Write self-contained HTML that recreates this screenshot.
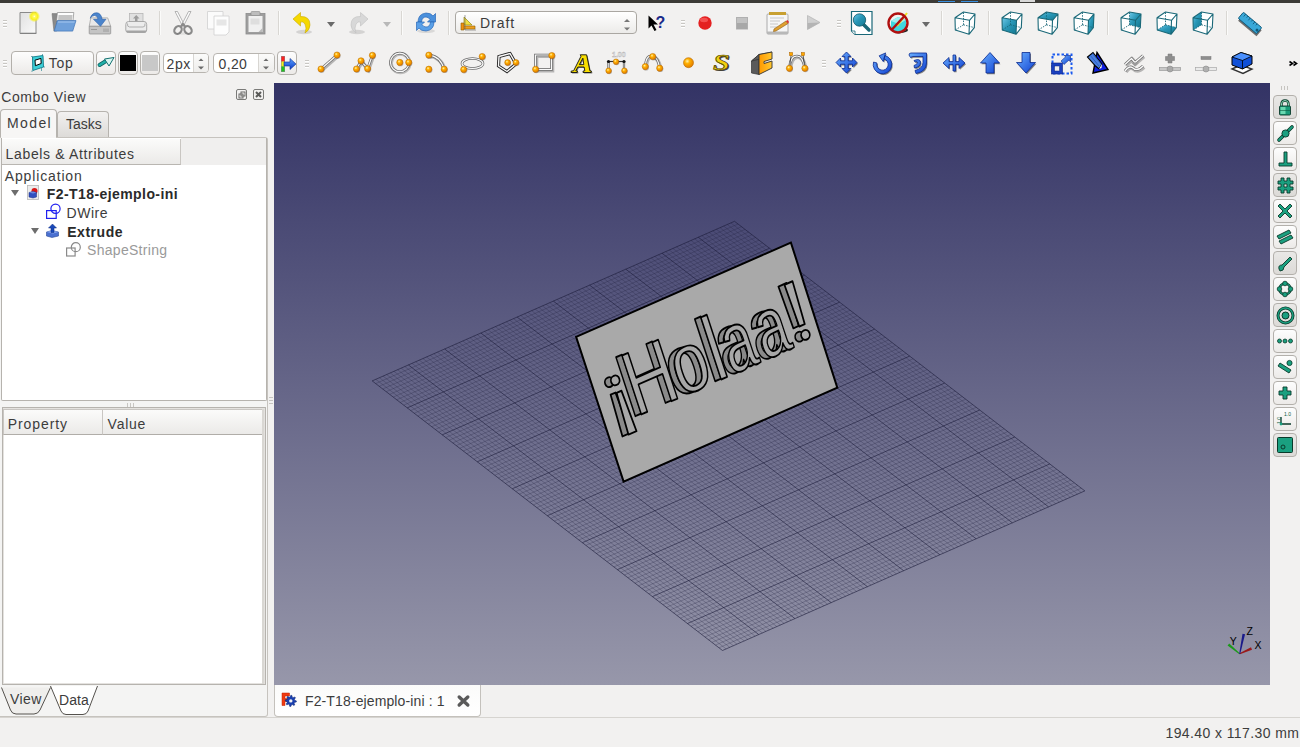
<!DOCTYPE html><html><head><meta charset="utf-8"><style>
html,body{margin:0;padding:0;}
body{width:1300px;height:747px;position:relative;overflow:hidden;background:#f2f1f0;font-family:"Liberation Sans", sans-serif;}
.t{position:absolute;white-space:nowrap;line-height:1;}
.a{position:absolute;box-sizing:border-box;}
svg{position:absolute;overflow:visible;}
</style></head><body>

<div class="a" style="left:0;top:0;width:1300px;height:3px;background:#3c3b37"></div>
<div class="a" style="left:938px;top:1px;width:17px;height:1px;background:#3a90e0"></div>
<div class="a" style="left:961px;top:1px;width:17px;height:1px;background:#3a90e0"></div>
<div class="a" style="left:1020px;top:0;width:15px;height:2px;background:#d8d8d8"></div>
<svg width="0" height="0" style="position:absolute"><defs>
<radialGradient id="gball" cx=".38" cy=".35" r=".7"><stop offset="0" stop-color="#fff3b0"/><stop offset=".35" stop-color="#ffb000"/><stop offset="1" stop-color="#e07800"/></radialGradient>
<linearGradient id="gblue" x1="0" y1="0" x2="0" y2="1"><stop offset="0" stop-color="#5aa0ff"/><stop offset="1" stop-color="#0a3cc8"/></linearGradient>
<linearGradient id="gblue2" x1="0" y1="0" x2="1" y2="1"><stop offset="0" stop-color="#6ab0ff"/><stop offset="1" stop-color="#1040d0"/></linearGradient>
<linearGradient id="gteal" x1="0" y1="0" x2="1" y2="1"><stop offset="0" stop-color="#6cc8e8"/><stop offset=".45" stop-color="#2a98b8"/><stop offset="1" stop-color="#137890"/></linearGradient>
<linearGradient id="gorange" x1="0" y1="0" x2="1" y2="0"><stop offset="0" stop-color="#ff9800"/><stop offset="1" stop-color="#ffc830"/></linearGradient>
<linearGradient id="gbtn" x1="0" y1="0" x2="0" y2="1"><stop offset="0" stop-color="#fdfdfd"/><stop offset="1" stop-color="#e6e5e3"/></linearGradient>
<linearGradient id="gpage" x1="0" y1="0" x2="1" y2="1"><stop offset="0" stop-color="#e0e0e0"/><stop offset="1" stop-color="#fafafa"/></linearGradient>
<radialGradient id="gyel" cx=".5" cy=".5" r=".5"><stop offset="0" stop-color="#fffff0"/><stop offset=".2" stop-color="#fff860"/><stop offset=".6" stop-color="#f8f020"/><stop offset="1" stop-color="#f8f020" stop-opacity="0"/></radialGradient>
</defs></svg>
<svg style="left:3px;top:20px;" width="4" height="8" viewBox="0 0 4 8"><rect x="0" y="0" width="4" height="1" fill="#c9c7c3"/><rect x="0" y="1" width="4" height="1" fill="#fff"/><rect x="0" y="3" width="4" height="1" fill="#c9c7c3"/><rect x="0" y="4" width="4" height="1" fill="#fff"/><rect x="0" y="6" width="4" height="1" fill="#c9c7c3"/><rect x="0" y="7" width="4" height="1" fill="#fff"/></svg>
<svg style="left:19px;top:11px;" width="24" height="24" viewBox="0 0 24 24"><path d="M1 1.5H17V22.5H1Z" fill="url(#gpage)" stroke="#8a8a8a" stroke-width="1"/><rect x="1.5" y="21.5" width="16" height="1.5" fill="#777" opacity=".5"/><circle cx="15.3" cy="5.4" r="5.8" fill="url(#gyel)"/></svg>
<svg style="left:52px;top:11.5px;" width="24" height="24" viewBox="0 0 24 24"><path d="M0 1.6H5.4L4.6 19.1H1.9Z" fill="#8a8a8a" stroke="#6a6a6a" stroke-width=".5"/><path d="M5.4 0.5H21.8L21 9H4.6Z" fill="#fdfdfd" stroke="#8a8a8a" stroke-width=".7"/><path d="M6.5 3H20.5L20 9H6Z" fill="#c4c4c4"/><path d="M5.4 8.6H24L20.7 19.1H2.2Z" fill="#6fa0da" stroke="#3e72b8" stroke-width=".7"/><path d="M6 9.4H22.8L22.5 10.4H5.7Z" fill="#a8c8f0"/></svg>
<svg style="left:89px;top:11.5px;" width="24" height="24" viewBox="0 0 24 24"><path d="M1.8 5.9H18.7L21.7 14.3H0.2Z" fill="#e8e8e8" stroke="#9a9a9a" stroke-width=".7"/><path d="M0.2 14.3H21.7V21.3Q21.7 22 21 22H0.9Q0.2 22 0.2 21.3Z" fill="#c4c4c4" stroke="#8c8c8c" stroke-width=".7"/><path d="M2 17.5H8M15 16.5V20M17 16.5V20M19 16.5V20" stroke="#9a9a9a" stroke-width="1"/><path d="M1.2 6.2Q3 0.5 8 0.8Q12 1.2 13.2 7.3H16.9L11.5 14.3L4.5 7.3H9Q8.5 3.5 5.5 3.5Q3 3.6 1.2 6.2Z" fill="#4a84cc" stroke="#2a5ea8" stroke-width=".6"/></svg>
<svg style="left:125px;top:13px;" width="24" height="24" viewBox="0 0 24 24"><rect x="4.5" y="0.5" width="13.5" height="9" fill="#e0e0e0" stroke="#b0b0b0" stroke-width=".7"/><path d="M11.2 2L14.5 5.5H12.5V8.5H10V5.5H8Z" fill="#9c9c9c"/><path d="M0.8 11.5Q0.8 8.5 3.5 8.5H19Q21.7 8.5 21.7 11.5V17Q21.7 19.5 19 19.5H3.5Q0.8 19.5 0.8 17Z" fill="#ececec" stroke="#a0a0a0" stroke-width=".9"/><path d="M2.5 10.5Q2 14 4.5 14H18Q20.5 14 20 10.5" fill="none" stroke="#a8a8a8" stroke-width=".9"/><path d="M1.5 17.5H21V18.5Q21 19.7 19.5 19.7H3Q1.5 19.7 1.5 18.5Z" fill="#a4a4a4"/></svg>
<svg style="left:159px;top:11px;" width="2" height="24" viewBox="0 0 2 24"><rect x="0" y="0" width="1" height="24" fill="#d9d7d3"/><rect x="1" y="0" width="1" height="24" fill="#fbfbfa"/></svg>
<svg style="left:173px;top:11px;" width="24" height="24" viewBox="0 0 24 24"><path d="M2 0.5L4.5 0.5L11.5 14L9.5 15Z" fill="#fafafa" stroke="#9a9a9a" stroke-width=".7"/><path d="M18 0.5L15.5 0.5L8.5 14L10.5 15Z" fill="#fafafa" stroke="#9a9a9a" stroke-width=".7"/><ellipse cx="5" cy="19" rx="3.4" ry="4.2" transform="rotate(35 5 19)" fill="none" stroke="#8a8a8a" stroke-width="2.2"/><ellipse cx="15" cy="19" rx="3.4" ry="4.2" transform="rotate(-35 15 19)" fill="none" stroke="#8a8a8a" stroke-width="2.2"/><path d="M8 15.5L10 13L12 15.5" stroke="#8a8a8a" stroke-width="2.2" fill="none"/><ellipse cx="10" cy="22.5" rx="7" ry="1.2" fill="#000" opacity=".07"/></svg>
<svg style="left:207px;top:10.5px;" width="24" height="24" viewBox="0 0 24 24"><path d="M0.5 0.5H16V18H0.5Z" fill="#fbfbfb" stroke="#d0d0d0" stroke-width=".8"/><path d="M7 5H22V21L19 24H7Z" fill="#fdfdfd" stroke="#d0d0d0" stroke-width=".8"/><rect x="9.5" y="8.5" width="10" height="6" fill="#e6e6e6"/></svg>
<svg style="left:245px;top:10.5px;" width="24" height="24" viewBox="0 0 24 24"><rect x="1" y="2.5" width="19" height="20.5" fill="#9e9e9e" stroke="#8c8c8c" stroke-width=".8"/><path d="M3.5 5H17.5V21H3.5Z" fill="#f0f0f0"/><rect x="6" y="0.5" width="9" height="4" rx="1" fill="#bdbdbd" stroke="#8c8c8c" stroke-width=".6"/><rect x="5.5" y="7.5" width="9" height="6" fill="#dedede"/><path d="M13.5 21L17.5 17V21Z" fill="#bbb"/></svg>
<svg style="left:278px;top:11px;" width="2" height="24" viewBox="0 0 2 24"><rect x="0" y="0" width="1" height="24" fill="#d9d7d3"/><rect x="1" y="0" width="1" height="24" fill="#fbfbfa"/></svg>
<svg style="left:293px;top:11.5px;" width="24" height="24" viewBox="0 0 24 24"><ellipse cx="11" cy="20" rx="8" ry="2.2" fill="#000" opacity=".12"/><path d="M0 7L7.5 0.5V4.5Q17 4 17 13Q17 18 12 21Q14 16 12 12Q10 9 7.5 10V14Z" fill="#f5d800" stroke="#c8a800" stroke-width=".6"/></svg>
<svg style="left:326.5px;top:22px;" width="8" height="5" viewBox="0 0 8 5"><path d="M0 0H8L4 5Z" fill="#6a6a6a"/></svg>
<svg style="left:350px;top:11.5px;" width="24" height="24" viewBox="0 0 24 24"><g transform="translate(18 0) scale(-1 1)"><ellipse cx="11" cy="20" rx="8" ry="2.2" fill="#000" opacity=".12"/><path d="M0 7L7.5 0.5V4.5Q17 4 17 13Q17 18 12 21Q14 16 12 12Q10 9 7.5 10V14Z" fill="#d8d8d8" stroke="#c0c0c0" stroke-width=".6"/></g></svg>
<svg style="left:382.5px;top:22px;" width="8" height="5" viewBox="0 0 8 5"><path d="M0 0H8L4 5Z" fill="#b8b8b8"/></svg>
<svg style="left:401px;top:11px;" width="2" height="24" viewBox="0 0 2 24"><rect x="0" y="0" width="1" height="24" fill="#d9d7d3"/><rect x="1" y="0" width="1" height="24" fill="#fbfbfa"/></svg>
<svg style="left:416px;top:12px;" width="24" height="24" viewBox="0 0 24 24"><ellipse cx="10" cy="19" rx="9" ry="2" fill="#000" opacity=".1"/><path d="M2 10Q2 2 10 1Q15 1 17 4L19.5 1.5V10H11.5L14 7.5Q12.5 5 10 5Q6 5 5.5 10Z" fill="#4a90dc" stroke="#2a68b8" stroke-width=".7"/><path d="M18 10Q18 18 10 19Q5 19 3 16L0.5 18.5V10H8.5L6 12.5Q7.5 15 10 15Q14 15 14.5 10Z" fill="#5aa0e8" stroke="#2a68b8" stroke-width=".7"/></svg>
<svg style="left:448px;top:11px;" width="2" height="24" viewBox="0 0 2 24"><rect x="0" y="0" width="1" height="24" fill="#d9d7d3"/><rect x="1" y="0" width="1" height="24" fill="#fbfbfa"/></svg>
<div class="a" style="left:455px;top:11px;width:182px;height:23px;border:1px solid #aaa7a2;border-radius:4px;background:linear-gradient(#ffffff,#ecebe9)"></div>
<svg style="left:460px;top:14px;" width="17" height="17" viewBox="0 0 17 17"><path d="M2 12H15V15H2Z" fill="#f0a020" stroke="#8a5a00" stroke-width=".6"/><path d="M4 11V3L12 11Z" fill="#f0e040" stroke="#8a7a00" stroke-width=".6"/><path d="M1 9H4V16H1Z" fill="#f09010" stroke="#8a5a00" stroke-width=".6"/><path d="M5 1V16M5 16H16" stroke="#666" stroke-width=".6"/></svg>
<div class="t" style="left:480px;top:16.45px;font-size:14px;color:#3c3c3c;font-weight:400;letter-spacing:0.95px;">Draft</div>
<svg style="left:623.5px;top:19px;" width="6" height="12" viewBox="0 0 6 12"><path d="M0 3L3 0L6 3Z" fill="#777"/><path d="M0 8.5L3 11.5L6 8.5Z" fill="#777"/></svg>
<svg style="left:647.5px;top:15px;" width="18" height="16" viewBox="0 0 18 16"><path d="M0.5 0.5V13.5L3.5 10.5L6.5 16L8.5 15L5.5 9.5H10Z" fill="#000"/><text x="7.5" y="12.5" font-family="Liberation Sans" font-weight="700" font-size="16" fill="#1a2a8a">?</text></svg>
<svg style="left:681px;top:20px;" width="4" height="8" viewBox="0 0 4 8"><rect x="0" y="0" width="4" height="1" fill="#c9c7c3"/><rect x="0" y="1" width="4" height="1" fill="#fff"/><rect x="0" y="3" width="4" height="1" fill="#c9c7c3"/><rect x="0" y="4" width="4" height="1" fill="#fff"/><rect x="0" y="6" width="4" height="1" fill="#c9c7c3"/><rect x="0" y="7" width="4" height="1" fill="#fff"/></svg>
<svg style="left:698px;top:16px;" width="14" height="14" viewBox="0 0 14 14"><circle cx="7" cy="7" r="6.7" fill="#e42020"/><ellipse cx="6" cy="4" rx="4" ry="2.2" fill="#ff7070" opacity=".6"/></svg>
<svg style="left:735.5px;top:16.5px;" width="12" height="13" viewBox="0 0 12 13"><rect x="0.5" y="0.5" width="11" height="11.5" fill="#c2c2c2" stroke="#b0b0b0"/><rect x="1" y="6" width="10" height="6" fill="#a8a8a8"/></svg>
<svg style="left:766px;top:11.5px;" width="24" height="24" viewBox="0 0 24 24"><rect x="1" y="2" width="21" height="20" rx="1" fill="#f6f6f6" stroke="#9a9a9a" stroke-width=".8"/><rect x="1" y="19.5" width="21" height="2.5" fill="#b8b8b8"/><rect x="3" y="0" width="17" height="3" fill="#c8a030"/><path d="M4 6H18M4 9H14M4 12H12M4 15H11" stroke="#c8c8c8" stroke-width="1"/><path d="M8 17L20 9L22 11.5L10 19L7.5 19.5Z" fill="#e0a030" stroke="#8a5a10" stroke-width=".6"/><path d="M20 9L22 11.5L23 10L21.5 8Z" fill="#e03030"/></svg>
<svg style="left:806.5px;top:15px;" width="14" height="16" viewBox="0 0 14 16"><path d="M0.5 0.5L13 7.5L0.5 14.5Z" fill="#d0d0d0" stroke="#b8b8b8" stroke-width=".8"/><path d="M0.5 8L13 7.5L0.5 14.5Z" fill="#b4b4b4"/></svg>
<svg style="left:837px;top:20px;" width="4" height="8" viewBox="0 0 4 8"><rect x="0" y="0" width="4" height="1" fill="#c9c7c3"/><rect x="0" y="1" width="4" height="1" fill="#fff"/><rect x="0" y="3" width="4" height="1" fill="#c9c7c3"/><rect x="0" y="4" width="4" height="1" fill="#fff"/><rect x="0" y="6" width="4" height="1" fill="#c9c7c3"/><rect x="0" y="7" width="4" height="1" fill="#fff"/></svg>
<svg style="left:851px;top:10.5px;" width="24" height="24" viewBox="0 0 24 24"><path d="M0.5 0.5H21V23.5H4L0.5 20Z" fill="#fff" stroke="#1a6878" stroke-width="1.2"/><path d="M0.5 20L4 20L4 23.5" fill="#fff" stroke="#1a6878" stroke-width=".8"/><path d="M12 13L18 19" stroke="#1a6878" stroke-width="3.5" stroke-linecap="round"/><circle cx="8.5" cy="9" r="6.2" fill="url(#gteal)" stroke="#115868" stroke-width=".8"/></svg>
<svg style="left:887px;top:12px;" width="24" height="24" viewBox="0 0 24 24"><ellipse cx="13" cy="18" rx="8" ry="3" fill="#222"/><path d="M4 9L11 5L19 8V18L12 22L4 18Z" fill="#40d8e0"/><path d="M4 9L11 5L19 8L12 12Z" fill="#a0f0f0"/><path d="M10 14L20 1" stroke="#f0e020" stroke-width="2"/><circle cx="11" cy="11" r="9.5" fill="none" stroke="#b01010" stroke-width="2.4"/><path d="M4.5 18L17.5 4" stroke="#b01010" stroke-width="2.4"/></svg>
<svg style="left:922px;top:22px;" width="8" height="5" viewBox="0 0 8 5"><path d="M0 0H8L4 5Z" fill="#6a6a6a"/></svg>
<svg style="left:941px;top:11px;" width="2" height="24" viewBox="0 0 2 24"><rect x="0" y="0" width="1" height="24" fill="#d9d7d3"/><rect x="1" y="0" width="1" height="24" fill="#fbfbfa"/></svg>
<svg style="left:954px;top:10.5px;" width="24" height="24" viewBox="0 0 24 24"><path d="M1.0 6.8L15.5 9.3L15.0 23.3L1.3 19.0ZM9.5 1.0L21.0 3.0L20.3 16.6L9.5 13.8Z" fill="#fff"/><path d="M1.0 6.8L15.5 9.3L21.0 3.0L9.5 1.0ZM15.5 9.3L21.0 3.0L20.3 16.6L15.0 23.3Z" fill="#fff"/><path d="M9.5 13.8L9.5 1.0M9.5 13.8L20.3 16.6M9.5 13.8L1.3 19.0" stroke="#1a6878" stroke-width=".9" stroke-dasharray="1.5 1.2" fill="none"/><path d="M1.0 6.8L15.5 9.3L15.0 23.3L1.3 19.0ZM1.0 6.8L9.5 1.0L21.0 3.0L15.5 9.3M21.0 3.0L20.3 16.6L15.0 23.3" stroke="#1a6878" stroke-width="1.1" fill="none" stroke-linejoin="round"/></svg>
<svg style="left:988px;top:11px;" width="2" height="24" viewBox="0 0 2 24"><rect x="0" y="0" width="1" height="24" fill="#d9d7d3"/><rect x="1" y="0" width="1" height="24" fill="#fbfbfa"/></svg>
<svg style="left:1000.5px;top:10.5px;" width="24" height="24" viewBox="0 0 24 24"><path d="M1.0 6.8L15.5 9.3L15.0 23.3L1.3 19.0ZM9.5 1.0L21.0 3.0L20.3 16.6L9.5 13.8Z" fill="#fff"/><path d="M1.0 6.8L15.5 9.3L21.0 3.0L9.5 1.0ZM15.5 9.3L21.0 3.0L20.3 16.6L15.0 23.3Z" fill="#fff"/><path d="M1.0 6.8L15.5 9.3L15.0 23.3L1.3 19.0Z" fill="url(#gteal)"/><path d="M9.5 13.8L9.5 1.0M9.5 13.8L20.3 16.6M9.5 13.8L1.3 19.0" stroke="#1a6878" stroke-width=".9" stroke-dasharray="1.5 1.2" fill="none"/><path d="M1.0 6.8L15.5 9.3L15.0 23.3L1.3 19.0ZM1.0 6.8L9.5 1.0L21.0 3.0L15.5 9.3M21.0 3.0L20.3 16.6L15.0 23.3" stroke="#1a6878" stroke-width="1.1" fill="none" stroke-linejoin="round"/></svg>
<svg style="left:1036.5px;top:10.5px;" width="24" height="24" viewBox="0 0 24 24"><path d="M1.0 6.8L15.5 9.3L15.0 23.3L1.3 19.0ZM9.5 1.0L21.0 3.0L20.3 16.6L9.5 13.8Z" fill="#fff"/><path d="M1.0 6.8L15.5 9.3L21.0 3.0L9.5 1.0ZM15.5 9.3L21.0 3.0L20.3 16.6L15.0 23.3Z" fill="#fff"/><path d="M1.0 6.8L15.5 9.3L21.0 3.0L9.5 1.0Z" fill="url(#gteal)"/><path d="M9.5 13.8L9.5 1.0M9.5 13.8L20.3 16.6M9.5 13.8L1.3 19.0" stroke="#1a6878" stroke-width=".9" stroke-dasharray="1.5 1.2" fill="none"/><path d="M1.0 6.8L15.5 9.3L15.0 23.3L1.3 19.0ZM1.0 6.8L9.5 1.0L21.0 3.0L15.5 9.3M21.0 3.0L20.3 16.6L15.0 23.3" stroke="#1a6878" stroke-width="1.1" fill="none" stroke-linejoin="round"/></svg>
<svg style="left:1073px;top:10.5px;" width="24" height="24" viewBox="0 0 24 24"><path d="M1.0 6.8L15.5 9.3L15.0 23.3L1.3 19.0ZM9.5 1.0L21.0 3.0L20.3 16.6L9.5 13.8Z" fill="#fff"/><path d="M1.0 6.8L15.5 9.3L21.0 3.0L9.5 1.0ZM15.5 9.3L21.0 3.0L20.3 16.6L15.0 23.3Z" fill="#fff"/><path d="M15.5 9.3L21.0 3.0L20.3 16.6L15.0 23.3Z" fill="url(#gteal)"/><path d="M9.5 13.8L9.5 1.0M9.5 13.8L20.3 16.6M9.5 13.8L1.3 19.0" stroke="#1a6878" stroke-width=".9" stroke-dasharray="1.5 1.2" fill="none"/><path d="M1.0 6.8L15.5 9.3L15.0 23.3L1.3 19.0ZM1.0 6.8L9.5 1.0L21.0 3.0L15.5 9.3M21.0 3.0L20.3 16.6L15.0 23.3" stroke="#1a6878" stroke-width="1.1" fill="none" stroke-linejoin="round"/></svg>
<svg style="left:1107px;top:11px;" width="2" height="24" viewBox="0 0 2 24"><rect x="0" y="0" width="1" height="24" fill="#d9d7d3"/><rect x="1" y="0" width="1" height="24" fill="#fbfbfa"/></svg>
<svg style="left:1120px;top:10.5px;" width="24" height="24" viewBox="0 0 24 24"><path d="M1.0 6.8L15.5 9.3L15.0 23.3L1.3 19.0ZM9.5 1.0L21.0 3.0L20.3 16.6L9.5 13.8Z" fill="#fff"/><path d="M1.0 6.8L15.5 9.3L21.0 3.0L9.5 1.0ZM15.5 9.3L21.0 3.0L20.3 16.6L15.0 23.3Z" fill="#fff"/><path d="M9.5 1.0L21.0 3.0L20.3 16.6L9.5 13.8Z" fill="url(#gteal)"/><path d="M9.5 13.8L9.5 1.0M9.5 13.8L20.3 16.6M9.5 13.8L1.3 19.0" stroke="#1a6878" stroke-width=".9" stroke-dasharray="1.5 1.2" fill="none"/><path d="M1.0 6.8L15.5 9.3L15.0 23.3L1.3 19.0ZM1.0 6.8L9.5 1.0L21.0 3.0L15.5 9.3M21.0 3.0L20.3 16.6L15.0 23.3" stroke="#1a6878" stroke-width="1.1" fill="none" stroke-linejoin="round"/></svg>
<svg style="left:1156px;top:10.5px;" width="24" height="24" viewBox="0 0 24 24"><path d="M1.0 6.8L15.5 9.3L15.0 23.3L1.3 19.0ZM9.5 1.0L21.0 3.0L20.3 16.6L9.5 13.8Z" fill="#fff"/><path d="M1.0 6.8L15.5 9.3L21.0 3.0L9.5 1.0ZM15.5 9.3L21.0 3.0L20.3 16.6L15.0 23.3Z" fill="#fff"/><path d="M1.3 19.0L15.0 23.3L20.3 16.6L9.5 13.8Z" fill="url(#gteal)"/><path d="M9.5 13.8L9.5 1.0M9.5 13.8L20.3 16.6M9.5 13.8L1.3 19.0" stroke="#1a6878" stroke-width=".9" stroke-dasharray="1.5 1.2" fill="none"/><path d="M1.0 6.8L15.5 9.3L15.0 23.3L1.3 19.0ZM1.0 6.8L9.5 1.0L21.0 3.0L15.5 9.3M21.0 3.0L20.3 16.6L15.0 23.3" stroke="#1a6878" stroke-width="1.1" fill="none" stroke-linejoin="round"/></svg>
<svg style="left:1192px;top:10.5px;" width="24" height="24" viewBox="0 0 24 24"><path d="M1.0 6.8L15.5 9.3L15.0 23.3L1.3 19.0ZM9.5 1.0L21.0 3.0L20.3 16.6L9.5 13.8Z" fill="#fff"/><path d="M1.0 6.8L15.5 9.3L21.0 3.0L9.5 1.0ZM15.5 9.3L21.0 3.0L20.3 16.6L15.0 23.3Z" fill="#fff"/><path d="M1.0 6.8L9.5 1.0L9.5 13.8L1.3 19.0Z" fill="url(#gteal)"/><path d="M9.5 13.8L9.5 1.0M9.5 13.8L20.3 16.6M9.5 13.8L1.3 19.0" stroke="#1a6878" stroke-width=".9" stroke-dasharray="1.5 1.2" fill="none"/><path d="M1.0 6.8L15.5 9.3L15.0 23.3L1.3 19.0ZM1.0 6.8L9.5 1.0L21.0 3.0L15.5 9.3M21.0 3.0L20.3 16.6L15.0 23.3" stroke="#1a6878" stroke-width="1.1" fill="none" stroke-linejoin="round"/></svg>
<svg style="left:1226px;top:11px;" width="2" height="24" viewBox="0 0 2 24"><rect x="0" y="0" width="1" height="24" fill="#d9d7d3"/><rect x="1" y="0" width="1" height="24" fill="#fbfbfa"/></svg>
<svg style="left:1239px;top:10.5px;" width="24" height="24" viewBox="0 0 24 24"><g transform="rotate(40 11 12)"><rect x="-1" y="8" width="24" height="8" fill="#333" opacity=".7" transform="translate(1.5 2)"/><rect x="-1" y="8" width="24" height="8" rx="1" fill="#3aa8d8" stroke="#115878" stroke-width=".9"/><path d="M2 8V11M5 8V10M8 8V11M11 8V10M14 8V11M17 8V10" stroke="#115878" stroke-width=".8"/><circle cx="21" cy="13" r="1.5" fill="#115878"/></g></svg>
<svg style="left:3px;top:60px;" width="4" height="8" viewBox="0 0 4 8"><rect x="0" y="0" width="4" height="1" fill="#c9c7c3"/><rect x="0" y="1" width="4" height="1" fill="#fff"/><rect x="0" y="3" width="4" height="1" fill="#c9c7c3"/><rect x="0" y="4" width="4" height="1" fill="#fff"/><rect x="0" y="6" width="4" height="1" fill="#c9c7c3"/><rect x="0" y="7" width="4" height="1" fill="#fff"/></svg>
<div class="a" style="left:11px;top:51px;width:83px;height:24px;border:1px solid #b3b0ab;border-radius:4px;background:linear-gradient(#fdfdfd,#eceae8)"></div>
<svg style="left:30.5px;top:55px;" width="15" height="17" viewBox="0 0 15 17"><path d="M1.5 2L12 0.5L12.5 12L1.8 15.5Z" fill="#3ccfd8" stroke="#127a88" stroke-width=".9"/><path d="M4 5.2L9.9 3.4L10.2 8.5L4.4 10.7Z" fill="#fff" stroke="#000" stroke-width="1"/><path d="M0 1.5H2M11.5 0V-1M1 15.5V17M12.5 12H14M10.5 13V16" stroke="#127a88" stroke-width=".6"/></svg>
<div class="t" style="left:48.8px;top:56.15px;font-size:14px;color:#3c3c3c;font-weight:400;letter-spacing:0.7px;">Top</div>
<div class="a" style="left:96px;top:51px;width:20px;height:24px;border:1px solid #b3b0ab;border-radius:4px;background:linear-gradient(#fdfdfd,#eceae8)"></div>
<svg style="left:96px;top:51px;" width="20" height="24" viewBox="0 0 20 24"><path d="M3.6 14L10 10" stroke="#0e6060" stroke-width="4" stroke-linecap="round"/><path d="M3.6 14L10 10" stroke="#20b0a8" stroke-width="2.6" stroke-linecap="round"/><path d="M8.5 8L18 6.5L13 15Z" fill="#d8f6f0" stroke="#127070" stroke-width="1"/></svg>
<div class="a" style="left:118px;top:51px;width:20px;height:24px;border:1px solid #b3b0ab;border-radius:4px;background:linear-gradient(#fdfdfd,#eceae8)"></div>
<div class="a" style="left:120px;top:55px;width:16px;height:16px;background:#000"></div>
<div class="a" style="left:140px;top:51px;width:20px;height:24px;border:1px solid #b3b0ab;border-radius:4px;background:linear-gradient(#fdfdfd,#eceae8)"></div>
<div class="a" style="left:142px;top:55px;width:16px;height:16px;background:#c8c8c8"></div>
<div class="a" style="left:162.5px;top:53px;width:46.5px;height:20px;border:1px solid #b8b5b0;border-radius:4px;background:#fff"></div>
<div class="a" style="left:193px;top:54px;width:15.0px;height:18px;border-left:1px solid #d8d6d2;border-radius:0 3px 3px 0;background:linear-gradient(#fbfbfa,#eeedeb)"></div>
<svg style="left:198.0px;top:57.5px;" width="6" height="12" viewBox="0 0 6 12"><path d="M0.5 3L3 0.5L5.5 3Z" fill="#6a6a6a"/><path d="M0 8.5L3 11.5L6 8.5Z" fill="#6a6a6a"/></svg>
<div class="t" style="left:166.5px;top:57.35px;font-size:14px;color:#3c3c3c;font-weight:400;letter-spacing:0.65px;">2px</div>
<div class="a" style="left:212.5px;top:53px;width:62px;height:20px;border:1px solid #b8b5b0;border-radius:4px;background:#fff"></div>
<div class="a" style="left:258px;top:54px;width:15.5px;height:18px;border-left:1px solid #d8d6d2;border-radius:0 3px 3px 0;background:linear-gradient(#fbfbfa,#eeedeb)"></div>
<svg style="left:263.25px;top:57.5px;" width="6" height="12" viewBox="0 0 6 12"><path d="M0.5 3L3 0.5L5.5 3Z" fill="#6a6a6a"/><path d="M0 8.5L3 11.5L6 8.5Z" fill="#6a6a6a"/></svg>
<div class="t" style="left:218.5px;top:57.15px;font-size:14px;color:#3c3c3c;font-weight:400;letter-spacing:0.35px;">0,20</div>
<div class="a" style="left:277px;top:51px;width:20px;height:24px;border:1px solid #b3b0ab;border-radius:4px;background:linear-gradient(#fdfdfd,#eceae8)"></div>
<svg style="left:279.5px;top:55px;" width="17" height="16" viewBox="0 0 17 16"><rect x="1" y="1" width="4" height="16" fill="#888"/><rect x="1.5" y="1.5" width="3" height="5" fill="#ff2020"/><rect x="1.5" y="6.5" width="3" height="5" fill="#f0f020"/><rect x="1.5" y="11.5" width="3" height="5" fill="#20c020"/><path d="M4 7H10V3.5L16 9L10 14.5V11H4Z" fill="url(#gblue)" stroke="#103090" stroke-width=".6"/></svg>
<svg style="left:305px;top:60px;" width="4" height="8" viewBox="0 0 4 8"><rect x="0" y="0" width="4" height="1" fill="#c9c7c3"/><rect x="0" y="1" width="4" height="1" fill="#fff"/><rect x="0" y="3" width="4" height="1" fill="#c9c7c3"/><rect x="0" y="4" width="4" height="1" fill="#fff"/><rect x="0" y="6" width="4" height="1" fill="#c9c7c3"/><rect x="0" y="7" width="4" height="1" fill="#fff"/></svg>
<svg style="left:317px;top:51px;" width="24" height="24" viewBox="0 0 24 24"><path d="M4 18L20 4" fill="none" stroke="#000" stroke-opacity=".25" stroke-width="4.0" transform="translate(.8 .9)"/><path d="M4 18L20 4" fill="none" stroke="#6b6b6b" stroke-width="2.6"/><path d="M4 18L20 4" fill="none" stroke="#fafafa" stroke-width="1.2000000000000002"/><circle cx="4.6" cy="18.8" r="3.1" fill="#000" opacity=".25"/><circle cx="4" cy="18" r="3.1" fill="url(#gball)" stroke="#b86b00" stroke-width=".5"/><circle cx="20.6" cy="4.8" r="3.1" fill="#000" opacity=".25"/><circle cx="20" cy="4" r="3.1" fill="url(#gball)" stroke="#b86b00" stroke-width=".5"/></svg>
<svg style="left:353px;top:51px;" width="24" height="24" viewBox="0 0 24 24"><path d="M3.5 18L8 10L14.6 17.7L19.4 4.3" fill="none" stroke="#000" stroke-opacity=".25" stroke-width="4.0" transform="translate(.8 .9)"/><path d="M3.5 18L8 10L14.6 17.7L19.4 4.3" fill="none" stroke="#6b6b6b" stroke-width="2.6"/><path d="M3.5 18L8 10L14.6 17.7L19.4 4.3" fill="none" stroke="#fafafa" stroke-width="1.2000000000000002"/><circle cx="4.1" cy="18.8" r="3.1" fill="#000" opacity=".25"/><circle cx="3.5" cy="18" r="3.1" fill="url(#gball)" stroke="#b86b00" stroke-width=".5"/><circle cx="8.6" cy="10.600000000000001" r="3.1" fill="#000" opacity=".25"/><circle cx="8" cy="9.8" r="3.1" fill="url(#gball)" stroke="#b86b00" stroke-width=".5"/><circle cx="15.2" cy="18.5" r="3.1" fill="#000" opacity=".25"/><circle cx="14.6" cy="17.7" r="3.1" fill="url(#gball)" stroke="#b86b00" stroke-width=".5"/><circle cx="20.0" cy="5.1" r="3.1" fill="#000" opacity=".25"/><circle cx="19.4" cy="4.3" r="3.1" fill="url(#gball)" stroke="#b86b00" stroke-width=".5"/></svg>
<svg style="left:388px;top:51px;" width="24" height="24" viewBox="0 0 24 24"><circle cx="11.8" cy="11.4" r="9.3" fill="none" stroke="#000" stroke-opacity=".22" stroke-width="3.6" transform="translate(.6 .8)"/><circle cx="11.8" cy="11.4" r="9.3" fill="none" stroke="#6b6b6b" stroke-width="2.6"/><circle cx="11.8" cy="11.4" r="9.3" fill="none" stroke="#fafafa" stroke-width="1.2"/><circle cx="12.4" cy="12.200000000000001" r="3.1" fill="#000" opacity=".25"/><circle cx="11.8" cy="11.4" r="3.1" fill="url(#gball)" stroke="#b86b00" stroke-width=".5"/><circle cx="21.3" cy="12.200000000000001" r="3.1" fill="#000" opacity=".25"/><circle cx="20.7" cy="11.4" r="3.1" fill="url(#gball)" stroke="#b86b00" stroke-width=".5"/></svg>
<svg style="left:424px;top:51px;" width="24" height="24" viewBox="0 0 24 24"><path d="M4.8 4.1Q16 5 20.2 18.2" fill="none" stroke="#000" stroke-opacity=".25" stroke-width="4.0" transform="translate(.8 .9)"/><path d="M4.8 4.1Q16 5 20.2 18.2" fill="none" stroke="#6b6b6b" stroke-width="2.6"/><path d="M4.8 4.1Q16 5 20.2 18.2" fill="none" stroke="#fafafa" stroke-width="1.2000000000000002"/><circle cx="5.3999999999999995" cy="4.8999999999999995" r="3.1" fill="#000" opacity=".25"/><circle cx="4.8" cy="4.1" r="3.1" fill="url(#gball)" stroke="#b86b00" stroke-width=".5"/><circle cx="5.3999999999999995" cy="19.0" r="3.1" fill="#000" opacity=".25"/><circle cx="4.8" cy="18.2" r="3.1" fill="url(#gball)" stroke="#b86b00" stroke-width=".5"/><circle cx="20.8" cy="19.0" r="3.1" fill="#000" opacity=".25"/><circle cx="20.2" cy="18.2" r="3.1" fill="url(#gball)" stroke="#b86b00" stroke-width=".5"/></svg>
<svg style="left:460px;top:51px;" width="24" height="24" viewBox="0 0 24 24"><ellipse cx="12.5" cy="12.5" rx="10.5" ry="5" fill="none" stroke="#6b6b6b" stroke-width="2.6"/><ellipse cx="12.5" cy="12.5" rx="10.5" ry="5" fill="none" stroke="#fafafa" stroke-width="1.2"/><circle cx="4.3" cy="19.3" r="3.1" fill="#000" opacity=".25"/><circle cx="3.7" cy="18.5" r="3.1" fill="url(#gball)" stroke="#b86b00" stroke-width=".5"/><circle cx="22.8" cy="6.3" r="3.1" fill="#000" opacity=".25"/><circle cx="22.2" cy="5.5" r="3.1" fill="url(#gball)" stroke="#b86b00" stroke-width=".5"/></svg>
<svg style="left:496px;top:51px;" width="24" height="24" viewBox="0 0 24 24"><path d="M3 5.5L14 2.5L20 13L11 20.5L2.5 15Z" fill="none" stroke="#222" stroke-width="3.2"/><path d="M3 5.5L14 2.5L20 13L11 20.5L2.5 15Z" fill="none" stroke="#fafafa" stroke-width="1.4"/><circle cx="12.2" cy="12.3" r="2.9" fill="#000" opacity=".25"/><circle cx="11.6" cy="11.5" r="2.9" fill="url(#gball)" stroke="#b86b00" stroke-width=".5"/><circle cx="20.6" cy="12.3" r="2.9" fill="#000" opacity=".25"/><circle cx="20" cy="11.5" r="2.9" fill="url(#gball)" stroke="#b86b00" stroke-width=".5"/></svg>
<svg style="left:534px;top:53px;" width="24" height="24" viewBox="0 0 24 24"><path d="M1.5 16.5V2H17.5V16.5Z" fill="none" stroke="#000" stroke-opacity=".25" stroke-width="4.0" transform="translate(.8 .9)"/><path d="M1.5 16.5V2H17.5V16.5Z" fill="none" stroke="#6b6b6b" stroke-width="2.6"/><path d="M1.5 16.5V2H17.5V16.5Z" fill="none" stroke="#fafafa" stroke-width="1.2000000000000002"/><circle cx="2.2" cy="17.1" r="3.1" fill="#000" opacity=".25"/><circle cx="1.6" cy="16.3" r="3.1" fill="url(#gball)" stroke="#b86b00" stroke-width=".5"/><circle cx="18.400000000000002" cy="3.3" r="3.1" fill="#000" opacity=".25"/><circle cx="17.8" cy="2.5" r="3.1" fill="url(#gball)" stroke="#b86b00" stroke-width=".5"/></svg>
<svg style="left:570px;top:52.5px;" width="24" height="24" viewBox="0 0 24 24"><path d="M1 19.5H7.2L7.5 18L5.8 17.8L7.9 14H14.1L14.8 17.8L13.2 18L13 19.5H21.2L21.4 18L19.9 17.8L16.6 1.8H10.2L11 3.2L3.6 17.8L1.3 18Z M9.4 11.6L12.9 5.2L13.8 11.6Z" fill="#222" opacity=".55" fill-rule="evenodd" transform="translate(1 1)"/><path d="M1 19.5H7.2L7.5 18L5.8 17.8L7.9 14H14.1L14.8 17.8L13.2 18L13 19.5H21.2L21.4 18L19.9 17.8L16.6 1.8H10.2L11 3.2L3.6 17.8L1.3 18Z M9.4 11.6L12.9 5.2L13.8 11.6Z" fill="#f8de00" fill-rule="evenodd" stroke="#111" stroke-width=".9" stroke-linejoin="round"/></svg>
<svg style="left:606px;top:51px;" width="24" height="24" viewBox="0 0 24 24"><text x="6" y="6" font-family="Liberation Sans" font-weight="700" font-size="7" fill="#fff" stroke="#aaa" stroke-width=".4">1.00</text><path d="M2.5 10.5V19M18 10.5V19" stroke="#555" stroke-width="2.2"/><path d="M2.5 10.5V19M18 10.5V19" stroke="#ddd" stroke-width=".9"/><path d="M2.5 10.5H18" stroke="#333" stroke-width="1.2"/><circle cx="2.5" cy="10.5" r="1.6" fill="#111"/><circle cx="18" cy="10.5" r="1.6" fill="#111"/><circle cx="3.2" cy="20.5" r="2.8" fill="#000" opacity=".25"/><circle cx="2.6" cy="19.7" r="2.8" fill="url(#gball)" stroke="#b86b00" stroke-width=".5"/><circle cx="19.0" cy="20.5" r="2.8" fill="#000" opacity=".25"/><circle cx="18.4" cy="19.7" r="2.8" fill="url(#gball)" stroke="#b86b00" stroke-width=".5"/><circle cx="10.6" cy="11.5" r="2.8" fill="#000" opacity=".25"/><circle cx="10" cy="10.7" r="2.8" fill="url(#gball)" stroke="#b86b00" stroke-width=".5"/></svg>
<svg style="left:641px;top:51px;" width="24" height="24" viewBox="0 0 24 24"><path d="M4.3 15.6Q5 3 11.7 5.5Q17 6 18.7 17.2" fill="none" stroke="#000" stroke-opacity=".25" stroke-width="4.0" transform="translate(.8 .9)"/><path d="M4.3 15.6Q5 3 11.7 5.5Q17 6 18.7 17.2" fill="none" stroke="#6b6b6b" stroke-width="2.6"/><path d="M4.3 15.6Q5 3 11.7 5.5Q17 6 18.7 17.2" fill="none" stroke="#fafafa" stroke-width="1.2000000000000002"/><circle cx="4.8999999999999995" cy="16.4" r="3.1" fill="#000" opacity=".25"/><circle cx="4.3" cy="15.6" r="3.1" fill="url(#gball)" stroke="#b86b00" stroke-width=".5"/><circle cx="12.299999999999999" cy="6.3" r="3.1" fill="#000" opacity=".25"/><circle cx="11.7" cy="5.5" r="3.1" fill="url(#gball)" stroke="#b86b00" stroke-width=".5"/><circle cx="19.3" cy="18.0" r="3.1" fill="#000" opacity=".25"/><circle cx="18.7" cy="17.2" r="3.1" fill="url(#gball)" stroke="#b86b00" stroke-width=".5"/></svg>
<svg style="left:683px;top:57px;" width="11" height="11" viewBox="0 0 11 11"><circle cx="5.5" cy="5.7" r="5" fill="url(#gball)" stroke="#b86b00" stroke-width=".6"/></svg>
<svg style="left:713px;top:52.5px;" width="24" height="24" viewBox="0 0 24 24"><g transform="scale(1.25 0.95)"><text x="0" y="18" font-family="Liberation Serif" font-style="italic" font-weight="700" font-size="24" fill="#444" transform="translate(1 1)">S</text><text x="0" y="18" font-family="Liberation Serif" font-style="italic" font-weight="700" font-size="24" fill="#f0d010" stroke="#4a3a00" stroke-width=".7">S</text></g></svg>
<svg style="left:751px;top:51px;" width="24" height="24" viewBox="0 0 24 24"><path d="M0.5 10L8 3.5V23.5L0.5 22Z" fill="#5a5a5a" stroke="#333" stroke-width=".7"/><path d="M0.5 10L8 3.5L21 1L13.5 7Z" fill="#5a5a5a" stroke="#333" stroke-width=".7"/><path d="M8 3.5L21 1V8L13 10.5V12.5L21 10V17L8 23.5Z" fill="url(#gorange)" stroke="#333" stroke-width=".9"/></svg>
<svg style="left:786px;top:51px;" width="24" height="24" viewBox="0 0 24 24"><path d="M3.5 17.5Q4 5 11 5Q17 5 18.8 17.5" fill="none" stroke="#000" stroke-opacity=".25" stroke-width="4.0" transform="translate(.8 .9)"/><path d="M3.5 17.5Q4 5 11 5Q17 5 18.8 17.5" fill="none" stroke="#6b6b6b" stroke-width="2.6"/><path d="M3.5 17.5Q4 5 11 5Q17 5 18.8 17.5" fill="none" stroke="#fafafa" stroke-width="1.2000000000000002"/><path d="M3.5 17.5L5.2 3M18.8 17.5L17 3" stroke="#222" stroke-width=".7"/><rect x="3.5" y="1.5" width="3.2" height="3.2" fill="#ffa800" stroke="#a86000" stroke-width=".5"/><rect x="15.3" y="1.5" width="3.2" height="3.2" fill="#ffa800" stroke="#a86000" stroke-width=".5"/><circle cx="4.0" cy="18.1" r="3.1" fill="#000" opacity=".25"/><circle cx="3.4" cy="17.3" r="3.1" fill="url(#gball)" stroke="#b86b00" stroke-width=".5"/><circle cx="19.5" cy="18.1" r="3.1" fill="#000" opacity=".25"/><circle cx="18.9" cy="17.3" r="3.1" fill="url(#gball)" stroke="#b86b00" stroke-width=".5"/></svg>
<svg style="left:822px;top:60px;" width="4" height="8" viewBox="0 0 4 8"><rect x="0" y="0" width="4" height="1" fill="#c9c7c3"/><rect x="0" y="1" width="4" height="1" fill="#fff"/><rect x="0" y="3" width="4" height="1" fill="#c9c7c3"/><rect x="0" y="4" width="4" height="1" fill="#fff"/><rect x="0" y="6" width="4" height="1" fill="#c9c7c3"/><rect x="0" y="7" width="4" height="1" fill="#fff"/></svg>
<svg style="left:835.5px;top:51.5px;" width="24" height="24" viewBox="0 0 24 24"><path d="M10.5 0L15 4.5H12.2V8.8H16.5V6L21 10.5L16.5 15V12.2H12.2V16.5H15L10.5 21L6 16.5H8.8V12.2H4.5V15L0 10.5L4.5 6V8.8H8.8V4.5H6Z" fill="#222" opacity=".55" transform="translate(1 1.2)"/><path d="M10.5 0L15 4.5H12.2V8.8H16.5V6L21 10.5L16.5 15V12.2H12.2V16.5H15L10.5 21L6 16.5H8.8V12.2H4.5V15L0 10.5L4.5 6V8.8H8.8V4.5H6Z" fill="url(#gblue2)" stroke="#0a2a90" stroke-width="0.8"/></svg>
<svg style="left:872px;top:52px;" width="24" height="24" viewBox="0 0 24 24"><path d="M12.91 3.52A9.3 9.3 0 1 1 1.52 10.09L4.99 11.02A5.7 5.7 0 1 0 11.98 6.99ZM13.61 0.91L7.13 3.83L11.28 9.60Z" fill="#222" opacity=".55" transform="translate(1 1.2)"/><path d="M12.91 3.52A9.3 9.3 0 1 1 1.52 10.09L4.99 11.02A5.7 5.7 0 1 0 11.98 6.99ZM13.61 0.91L7.13 3.83L11.28 9.60Z" fill="url(#gblue2)" stroke="#0a2a90" stroke-width="0.8"/></svg>
<svg style="left:908px;top:52px;" width="24" height="24" viewBox="0 0 24 24"><path d="M1 3Q1 1 3 1H18.5V11Q18.5 19.5 8 21.5L7 18.5Q15 16.5 15 10.5V4.5H4.5L2.5 5.5Z M6 8.5Q12.5 6 12.5 10.5Q12.5 15 6.5 16L6 13.5Q9.5 12.5 9.5 10.5Q9.5 9 7 10Z" fill="#222" opacity=".55" transform="translate(1 1.2)"/><path d="M1 3Q1 1 3 1H18.5V11Q18.5 19.5 8 21.5L7 18.5Q15 16.5 15 10.5V4.5H4.5L2.5 5.5Z M6 8.5Q12.5 6 12.5 10.5Q12.5 15 6.5 16L6 13.5Q9.5 12.5 9.5 10.5Q9.5 9 7 10Z" fill="url(#gblue2)" stroke="#0a2a90" stroke-width="0.8"/></svg>
<svg style="left:943px;top:55px;" width="24" height="24" viewBox="0 0 24 24"><path d="M0 8L6 2.5V6.6H10V0H12.6V6.6H16V2.5L22 8L16 13.5V9.4H12.6V16H10V9.4H6V13.5Z" fill="#222" opacity=".55" transform="translate(1 1.2)"/><path d="M0 8L6 2.5V6.6H10V0H12.6V6.6H16V2.5L22 8L16 13.5V9.4H12.6V16H10V9.4H6V13.5Z" fill="url(#gblue2)" stroke="#0a2a90" stroke-width="0.8"/></svg>
<svg style="left:980px;top:52px;" width="24" height="24" viewBox="0 0 24 24"><path d="M10 0.5L19.5 11H14V21H6V11H0.5Z" fill="#222" opacity=".55" transform="translate(1 1.2)"/><path d="M10 0.5L19.5 11H14V21H6V11H0.5Z" fill="url(#gblue2)" stroke="#0a2a90" stroke-width="0.8"/></svg>
<svg style="left:1016px;top:52px;" width="24" height="24" viewBox="0 0 24 24"><path d="M6 0.5H14V10.5H19.5L10 21L0.5 10.5H6Z" fill="#222" opacity=".55" transform="translate(1 1.2)"/><path d="M6 0.5H14V10.5H19.5L10 21L0.5 10.5H6Z" fill="url(#gblue2)" stroke="#0a2a90" stroke-width="0.8"/></svg>
<svg style="left:1051px;top:52.5px;" width="24" height="24" viewBox="0 0 24 24"><rect x="1.5" y="1.5" width="19" height="19" fill="none" stroke="#1a5af0" stroke-width="2" stroke-dasharray="2.5 2"/><path d="M10 8L15 3.5L13 2.5H19.5V9L18 7L13 11.5Z" fill="url(#gblue2)" stroke="#0a2a90" stroke-width=".6"/><rect x="0.5" y="10" width="11" height="11" fill="#1a40c0" stroke="#0a2080" stroke-width=".6"/><rect x="3.5" y="13" width="5" height="5" fill="#f0f0f0" stroke="#0a2080" stroke-width=".5"/></svg>
<svg style="left:1087px;top:52px;" width="24" height="24" viewBox="0 0 24 24"><path d="M10 0.5L21 17.5L6 21Z" fill="#1020e0" stroke="#000" stroke-width="1.4"/><path d="M0.5 5L6 0.5L15 12L12 17L8.5 14Z" fill="#4a80e0" stroke="#000" stroke-width="1.1"/><path d="M3 3L12 14M5.5 1.5L14 12" stroke="#2050b0" stroke-width=".7"/><path d="M12 17L15 12L14.5 16Z" fill="#fff"/></svg>
<svg style="left:1123px;top:52px;" width="24" height="24" viewBox="0 0 24 24"><path d="M2 12.5L8.5 6.5L12 10.5L20 3.5" fill="none" stroke="#000" stroke-opacity=".25" stroke-width="4.199999999999999" transform="translate(.8 .9)"/><path d="M2 12.5L8.5 6.5L12 10.5L20 3.5" fill="none" stroke="#6b6b6b" stroke-width="2.8"/><path d="M2 12.5L8.5 6.5L12 10.5L20 3.5" fill="none" stroke="#fafafa" stroke-width="1.4"/><path d="M2 19Q6 13 10 16Q14 20 20 14" fill="none" stroke="#000" stroke-opacity=".25" stroke-width="4.199999999999999" transform="translate(.8 .9)"/><path d="M2 19Q6 13 10 16Q14 20 20 14" fill="none" stroke="#6b6b6b" stroke-width="2.8"/><path d="M2 19Q6 13 10 16Q14 20 20 14" fill="none" stroke="#fafafa" stroke-width="1.4"/><path d="M8 10.5H16L12 14.5Z" fill="#9a9a9a"/></svg>
<svg style="left:1159px;top:54px;" width="24" height="24" viewBox="0 0 24 24"><path d="M6.5 2.5H9V0H13V2.5H15.5V6.5H13V9H9V6.5H6.5Z" fill="#8e8e8e" stroke="#777" stroke-width=".5" transform="translate(0 0)"/><rect x="0.5" y="13.5" width="21" height="3" fill="#c8c8c8" stroke="#9a9a9a" stroke-width=".7"/><circle cx="11" cy="15" r="3" fill="#a8a8a8" stroke="#8a8a8a" stroke-width=".6"/></svg>
<svg style="left:1195px;top:55.5px;" width="24" height="24" viewBox="0 0 24 24"><rect x="6" y="0.5" width="10" height="3" fill="#8e8e8e" stroke="#777" stroke-width=".5"/><rect x="0.5" y="11.5" width="21" height="3" fill="#eaeaea" stroke="#a8a8a8" stroke-width=".7"/><circle cx="11" cy="13" r="3" fill="#b0b0b0" stroke="#8a8a8a" stroke-width=".6"/></svg>
<svg style="left:1231px;top:51.5px;" width="24" height="24" viewBox="0 0 24 24"><path d="M1 17L10 13L21 17L12 21.5Z" fill="#fff" stroke="#333" stroke-width="1.4"/><path d="M1 5L10 0.5L21 4V12L11.5 17L1 13Z" fill="#1050d8" stroke="#000" stroke-width="1"/><path d="M1 5L10 0.5L21 4L11.5 8.5Z" fill="#4a90ff" stroke="#000" stroke-width=".8"/><path d="M11.5 8.5V17" stroke="#000" stroke-width=".8"/></svg>
<svg style="left:1289px;top:61px;" width="8" height="5" viewBox="0 0 8 5"><path d="M0.5 0.5L3.5 2.5L0.5 4.5M4.5 0.5L7.5 2.5L4.5 4.5" stroke="#000" stroke-width="1.6" fill="none"/></svg>
<div class="a" style="left:1270px;top:83px;width:30px;height:602px;background:#f2f1f0"></div>
<svg style="left:1281px;top:86px;" width="8" height="4" viewBox="0 0 8 4"><rect x="0" y="0" width="1" height="4" fill="#c6c4c0"/><rect x="3" y="0" width="1" height="4" fill="#c6c4c0"/><rect x="6" y="0" width="1" height="4" fill="#c6c4c0"/></svg>
<div class="a" style="left:1273px;top:95px;width:24px;height:24px;border:1px solid #b3b0ab;border-radius:4px;background:linear-gradient(#e9e8e6,#dcdad7)"></div>
<svg style="left:1276.5px;top:98.5px;" width="17" height="17" viewBox="0 0 17 17"><path d="M4.5 7V5Q4.5 1.5 8 1.5Q11.5 1.5 11.5 5V7" fill="none" stroke="#0a3a2a" stroke-width="2.4"/><path d="M4.5 7V5Q4.5 1.5 8 1.5Q11.5 1.5 11.5 5V7" fill="none" stroke="#8ad8b8" stroke-width="1"/><rect x="2.5" y="7" width="11" height="9" rx="1" fill="#1a9a78" stroke="#0a3a2a" stroke-width=".9"/><rect x="3.5" y="8" width="5" height="7" fill="#6ad8b0"/><path d="M3 11.5H13" stroke="#0a5a40" stroke-width=".6"/></svg>
<div class="a" style="left:1273px;top:121px;width:24px;height:24px;border:1px solid #b3b0ab;border-radius:4px;background:linear-gradient(#fdfdfd,#eceae8)"></div>
<svg style="left:1276.5px;top:124.5px;" width="17" height="17" viewBox="0 0 17 17"><path d="M2 15L15 2" stroke="#0a3a2a" stroke-width="3.6" stroke-linecap="round"/><path d="M2 15L15 2" stroke="#1aa080" stroke-width="2" stroke-linecap="round"/><circle cx="8.5" cy="8.5" r="3.6" fill="#1aa080" stroke="#0a3a2a" stroke-width=".9"/></svg>
<div class="a" style="left:1273px;top:147px;width:24px;height:24px;border:1px solid #b3b0ab;border-radius:4px;background:linear-gradient(#fdfdfd,#eceae8)"></div>
<svg style="left:1276.5px;top:150.5px;" width="17" height="17" viewBox="0 0 17 17"><path d="M7 1H10V12H15V15H2V12H7Z" fill="#1aa080" stroke="#0a3a2a" stroke-width=".9"/></svg>
<div class="a" style="left:1273px;top:173px;width:24px;height:24px;border:1px solid #b3b0ab;border-radius:4px;background:linear-gradient(#e9e8e6,#dcdad7)"></div>
<svg style="left:1276.5px;top:176.5px;" width="17" height="17" viewBox="0 0 17 17"><path d="M4 1H7V4H10V1H13V4H16V7H13V10H16V13H13V16H10V13H7V16H4V13H1V10H4V7H1V4H4Z M7 7V10H10V7Z" fill="#1aa080" stroke="#0a3a2a" stroke-width=".9"/></svg>
<div class="a" style="left:1273px;top:199px;width:24px;height:24px;border:1px solid #b3b0ab;border-radius:4px;background:linear-gradient(#fdfdfd,#eceae8)"></div>
<svg style="left:1277.0px;top:203.0px;" width="16" height="16" viewBox="0 0 16 16"><path d="M1 3L3 1L8 6L13 1L15 3L10 8L15 13L13 15L8 10L3 15L1 13L6 8Z" fill="#1aa080" stroke="#0a3a2a" stroke-width=".9"/></svg>
<div class="a" style="left:1273px;top:225px;width:24px;height:24px;border:1px solid #b3b0ab;border-radius:4px;background:linear-gradient(#fdfdfd,#eceae8)"></div>
<svg style="left:1276.0px;top:229.0px;" width="18" height="16" viewBox="0 0 18 16"><path d="M1 7L13 1L15 4L3 10Z" fill="#1aa080" stroke="#0a3a2a" stroke-width=".9"/><path d="M3 12L15 6L17 9L5 15Z" fill="#1aa080" stroke="#0a3a2a" stroke-width=".9"/></svg>
<div class="a" style="left:1273px;top:251px;width:24px;height:24px;border:1px solid #b3b0ab;border-radius:4px;background:linear-gradient(#e9e8e6,#dcdad7)"></div>
<svg style="left:1277.0px;top:254.5px;" width="16" height="17" viewBox="0 0 16 17"><path d="M2 14Q1 10 5 10L13 2L15 4L7 12Q7 16 3 16Z" fill="#1aa080" stroke="#0a3a2a" stroke-width=".9"/></svg>
<div class="a" style="left:1273px;top:277px;width:24px;height:24px;border:1px solid #b3b0ab;border-radius:4px;background:linear-gradient(#fdfdfd,#eceae8)"></div>
<svg style="left:1277.0px;top:280.5px;" width="16" height="17" viewBox="0 0 16 17"><circle cx="8" cy="8" r="5.5" fill="none" stroke="#0a3a2a" stroke-width="2.6"/><circle cx="8" cy="8" r="5.5" fill="none" stroke="#1aa080" stroke-width="1.2"/><circle cx="8" cy="2.5" r="2.3" fill="#1aa080" stroke="#0a3a2a" stroke-width=".8"/><circle cx="13.5" cy="8" r="2.3" fill="#1aa080" stroke="#0a3a2a" stroke-width=".8"/><circle cx="8" cy="13.5" r="2.3" fill="#1aa080" stroke="#0a3a2a" stroke-width=".8"/><circle cx="2.5" cy="8" r="2.3" fill="#1aa080" stroke="#0a3a2a" stroke-width=".8"/></svg>
<div class="a" style="left:1273px;top:303px;width:24px;height:24px;border:1px solid #b3b0ab;border-radius:4px;background:linear-gradient(#e9e8e6,#dcdad7)"></div>
<svg style="left:1276.5px;top:306.5px;" width="17" height="17" viewBox="0 0 17 17"><circle cx="8.5" cy="8.5" r="7.5" fill="none" stroke="#0a3a2a" stroke-width="3"/><circle cx="8.5" cy="8.5" r="7.5" fill="none" stroke="#1aa080" stroke-width="1.4"/><circle cx="8.5" cy="8.5" r="3.5" fill="#1aa080" stroke="#0a3a2a" stroke-width="1"/></svg>
<div class="a" style="left:1273px;top:329px;width:24px;height:24px;border:1px solid #b3b0ab;border-radius:4px;background:linear-gradient(#fdfdfd,#eceae8)"></div>
<svg style="left:1277.0px;top:336.0px;" width="16" height="10" viewBox="0 0 16 10"><circle cx="2.5" cy="5" r="2" fill="#1aa080" stroke="#0a3a2a" stroke-width=".8"/><circle cx="8" cy="5" r="2" fill="#1aa080" stroke="#0a3a2a" stroke-width=".8"/><circle cx="13.5" cy="5" r="2" fill="#1aa080" stroke="#0a3a2a" stroke-width=".8"/></svg>
<div class="a" style="left:1273px;top:355px;width:24px;height:24px;border:1px solid #b3b0ab;border-radius:4px;background:linear-gradient(#fdfdfd,#eceae8)"></div>
<svg style="left:1277.0px;top:360.0px;" width="16" height="14" viewBox="0 0 16 14"><path d="M1 6L3 3L14 10L12 13Z" fill="#1aa080" stroke="#0a3a2a" stroke-width=".9"/><circle cx="12.5" cy="3" r="2.6" fill="#1aa080" stroke="#0a3a2a" stroke-width=".8"/></svg>
<div class="a" style="left:1273px;top:381px;width:24px;height:24px;border:1px solid #b3b0ab;border-radius:4px;background:linear-gradient(#fdfdfd,#eceae8)"></div>
<svg style="left:1278.0px;top:386.0px;" width="14" height="14" viewBox="0 0 14 14"><path d="M5 1H9V5H13V9H9V13H5V9H1V5H5Z" fill="#1aa080" stroke="#0a3a2a" stroke-width=".9"/></svg>
<div class="a" style="left:1273px;top:407px;width:24px;height:24px;border:1px solid #b3b0ab;border-radius:4px;background:linear-gradient(#fdfdfd,#eceae8)"></div>
<svg style="left:1277.0px;top:411.0px;" width="16" height="16" viewBox="0 0 16 16"><path d="M4 6V13H14" fill="none" stroke="#0a3a2a" stroke-width="1.3"/><text x="7" y="5" font-size="5" font-family="Liberation Sans" fill="#0a5a40">1.0</text><text x="0" y="13" font-size="5" font-family="Liberation Sans" fill="#0a5a40" transform="rotate(-90 2 11)">1.0</text><circle cx="4" cy="13" r="1.4" fill="#1aa080"/></svg>
<div class="a" style="left:1273px;top:433px;width:24px;height:24px;border:1px solid #b3b0ab;border-radius:4px;background:linear-gradient(#e9e8e6,#dcdad7)"></div>
<svg style="left:1277.0px;top:437.0px;" width="16" height="16" viewBox="0 0 16 16"><rect x="0.5" y="0.5" width="15" height="15" rx="1" fill="#1aa080" stroke="#0a3a2a" stroke-width="1"/><circle cx="6" cy="10" r="2" fill="none" stroke="#0a3a2a" stroke-width="1"/></svg>
<div class="t" style="left:1.2px;top:89.65px;font-size:14px;color:#3c3c3c;font-weight:400;letter-spacing:0.6px;">Combo View</div>
<svg style="left:236px;top:89px;" width="12" height="12" viewBox="0 0 12 12"><rect x="0.5" y="0.5" width="10" height="10" rx="1.5" fill="none" stroke="#7a7a78"/><rect x="3" y="5" width="4" height="4" fill="none" stroke="#6a6a68"/><rect x="5" y="3" width="4" height="4" fill="none" stroke="#6a6a68"/></svg>
<svg style="left:253px;top:89px;" width="12" height="12" viewBox="0 0 12 12"><rect x="0.5" y="0.5" width="10" height="10" rx="1.5" fill="none" stroke="#7a7a78"/><path d="M3 3L8 8M8 3L3 8" stroke="#5a5a58" stroke-width="2"/></svg>
<div class="a" style="left:0;top:109px;width:57px;height:30px;background:#f7f6f5;border:1px solid #b6b3ae;border-bottom:none;border-radius:4px 4px 0 0"></div>
<div class="a" style="left:57px;top:111px;width:52px;height:27px;background:linear-gradient(#f2f1f0,#dcdad7);border:1px solid #b6b3ae;border-bottom:none;border-radius:4px 4px 0 0"></div>
<div class="t" style="left:7px;top:116.15px;font-size:14px;color:#3c3c3c;font-weight:400;letter-spacing:1.4px;">Model</div>
<div class="t" style="left:66px;top:117.15px;font-size:14px;color:#3c3c3c;font-weight:400;letter-spacing:0px;">Tasks</div>
<div class="a" style="left:0px;top:137px;width:268px;height:580px;background:#f4f4f3;border:1px solid #c6c3be;border-left:none;border-radius:0 3px 3px 0"></div>
<div class="a" style="left:1px;top:138px;width:266px;height:263px;background:#ffffff;border:1px solid #b6b3ae;border-top:none;border-radius:0 0 2px 2px"></div>
<div class="a" style="left:1px;top:137px;width:55px;height:1px;background:#f7f6f5"></div>
<div class="a" style="left:2px;top:139px;width:179px;height:26px;background:linear-gradient(#fbfbfa,#ebeae8);border-right:1px solid #c9c6c2;border-bottom:1px solid #b9b6b1"></div>
<div class="a" style="left:181px;top:138px;width:85px;height:27px;background:#f0efee"></div>
<div class="t" style="left:5.6px;top:146.85px;font-size:14px;color:#3c3c3c;font-weight:400;letter-spacing:0.65px;">Labels &amp; Attributes</div>
<div class="t" style="left:4.8px;top:168.65px;font-size:14px;color:#3c3c3c;font-weight:400;letter-spacing:0.85px;">Application</div>
<svg style="left:11px;top:190px;" width="8" height="6" viewBox="0 0 8 6"><path d="M0 0H8L4 6Z" fill="#6d6d6d"/></svg>
<svg style="left:27px;top:185px;" width="12" height="15" viewBox="0 0 12 15"><rect x="0.5" y="0.5" width="11" height="14" fill="#ececec" stroke="#b8b8b8" stroke-width=".8"/><circle cx="7.5" cy="6" r="3" fill="#d81818"/><path d="M2 7.5L6 6.5L9.5 7.5V12L6 13L2 12Z" fill="#3050c0" stroke="#1a2a80" stroke-width=".5"/><path d="M2 7.5L6 6.5L9.5 7.5L6 8.5Z" fill="#6a8ae0"/></svg>
<div class="t" style="left:46.8px;top:186.85px;font-size:14px;color:#2a2a2a;font-weight:700;letter-spacing:0.42px;">F2-T18-ejemplo-ini</div>
<svg style="left:45px;top:203px;" width="16" height="16" viewBox="0 0 16 16"><rect x="1.6" y="7.6" width="9.6" height="7.8" fill="none" stroke="#2020f0" stroke-width="1.2"/><circle cx="10.5" cy="5.7" r="4.6" fill="none" stroke="#2020f0" stroke-width="1.2"/></svg>
<div class="t" style="left:66.6px;top:206.15px;font-size:14px;color:#3c3c3c;font-weight:400;letter-spacing:0.5px;">DWire</div>
<svg style="left:31px;top:228px;" width="8" height="6" viewBox="0 0 8 6"><path d="M0 0H8L4 6Z" fill="#6d6d6d"/></svg>
<svg style="left:45px;top:223px;" width="16" height="15" viewBox="0 0 16 15"><path d="M1.5 9L7 7.5L13.5 9V13L7 14.5L1.5 13Z" fill="#4a70d0" stroke="#2a4a98" stroke-width=".6"/><path d="M1.5 9L7 7.5L13.5 9L8 10.5Z" fill="#8aa8f0"/><path d="M7.5 1L11.5 5H9V9.5H6V5H3.5Z" fill="#1a48b8" stroke="#0a2a80" stroke-width=".5"/></svg>
<div class="t" style="left:67.2px;top:224.85px;font-size:14px;color:#2a2a2a;font-weight:700;letter-spacing:0.55px;">Extrude</div>
<svg style="left:66px;top:242px;" width="15" height="15" viewBox="0 0 15 15"><rect x="0.6" y="6" width="8.5" height="8" fill="none" stroke="#8a8a8a" stroke-width="1.2"/><circle cx="9.8" cy="5.2" r="4.5" fill="none" stroke="#8a8a8a" stroke-width="1.2"/></svg>
<div class="t" style="left:87px;top:243.15px;font-size:14px;color:#9a9a9a;font-weight:400;letter-spacing:0.3px;">ShapeString</div>
<div class="a" style="left:127px;top:403px;width:1px;height:4px;background:#c8c6c2"></div>
<div class="a" style="left:130px;top:403px;width:1px;height:4px;background:#c8c6c2"></div>
<div class="a" style="left:133px;top:403px;width:1px;height:4px;background:#c8c6c2"></div>
<div class="a" style="left:2px;top:407px;width:264px;height:278px;background:#ffffff;border:1px solid #b6b3ae;box-shadow:inset 0 0 0 1px #e4e2df"></div>
<div class="a" style="left:3px;top:409px;width:100px;height:26px;background:linear-gradient(#fbfbfa,#ebeae8);border:1px solid #c9c6c2;border-bottom:1px solid #b0ada8"></div>
<div class="a" style="left:103px;top:409px;width:160px;height:26px;background:linear-gradient(#fbfbfa,#ebeae8);border:1px solid #c9c6c2;border-left:none;border-bottom:1px solid #b0ada8"></div>
<div class="a" style="left:262px;top:409px;width:2px;height:275px;background:#d9d7d3"></div>
<div class="t" style="left:7.8px;top:417.45px;font-size:14px;color:#3c3c3c;font-weight:400;letter-spacing:0.9px;">Property</div>
<div class="t" style="left:107.6px;top:417.45px;font-size:14px;color:#3c3c3c;font-weight:400;letter-spacing:0.75px;">Value</div>
<svg style="left:0px;top:685px;" width="110" height="32" viewBox="0 0 110 32"><path d="M50.5 2.5 L40 25 Q38 29 34 29 L16 29 Q12 29 10.5 25 L1.5 2.5" fill="#efeeec" stroke="#55524e" stroke-width="1"/><path d="M50.5 1 L61 26 Q62.5 29.5 66 29.5 L83 29.5 Q86.5 29.5 88 26 L97.5 1" fill="#ffffff" stroke="#55524e" stroke-width="1"/></svg>
<div class="t" style="left:10px;top:692.15px;font-size:14px;color:#3c3c3c;font-weight:400;letter-spacing:0.4px;">View</div>
<div class="t" style="left:59px;top:692.65px;font-size:14px;color:#3c3c3c;font-weight:400;letter-spacing:0.1px;">Data</div>
<div class="a" style="left:269px;top:397px;width:4px;height:1px;background:#c6c4c0"></div>
<div class="a" style="left:269px;top:400px;width:4px;height:1px;background:#c6c4c0"></div>
<div class="a" style="left:269px;top:403px;width:4px;height:1px;background:#c6c4c0"></div>
<div class="a" style="left:274px;top:83px;width:996px;height:602px;background:linear-gradient(to bottom,#333365,#9797aa)"></div>
<svg style="left:274px;top:83px;" width="996" height="602" viewBox="0 0 996 602"><path d="M101.82 296.30L452.12 565.90M101.70 300.60L464.00 141.00M105.45 294.71L455.75 564.31M105.21 303.29L467.51 143.69M109.07 293.11L459.37 562.71M108.71 305.99L471.01 146.39M112.69 291.52L462.99 561.12M112.21 308.68L474.51 149.08M116.31 289.92L466.62 559.52M115.71 311.38L478.01 151.78M119.94 288.32L470.24 557.92M119.22 314.08L481.52 154.48M123.56 286.73L473.86 556.33M122.72 316.77L485.02 157.17M127.18 285.13L477.48 554.73M126.22 319.47L488.52 159.87M130.81 283.54L481.11 553.14M129.73 322.16L492.03 162.56M138.05 280.34L488.35 549.94M136.73 327.56L499.03 167.96M141.68 278.75L491.98 548.35M140.24 330.25L502.54 170.65M145.30 277.15L495.60 546.75M143.74 332.95L506.04 173.35M148.92 275.56L499.22 545.16M147.24 335.64L509.54 176.04M152.54 273.96L502.85 543.56M150.75 338.34L513.04 178.74M156.17 272.36L506.47 541.96M154.25 341.04L516.55 181.44M159.79 270.77L510.09 540.37M157.75 343.73L520.05 184.13M163.41 269.17L513.71 538.77M161.25 346.43L523.55 186.83M167.04 267.58L517.34 537.18M164.76 349.12L527.06 189.52M174.28 264.38L524.58 533.98M171.76 354.52L534.06 194.92M177.91 262.79L528.21 532.39M175.27 357.21L537.57 197.61M181.53 261.19L531.83 530.79M178.77 359.91L541.07 200.31M185.15 259.60L535.45 529.20M182.27 362.60L544.57 203.00M188.77 258.00L539.08 527.60M185.77 365.30L548.08 205.70M192.40 256.40L542.70 526.00M189.28 368.00L551.58 208.40M196.02 254.81L546.32 524.41M192.78 370.69L555.08 211.09M199.64 253.21L549.94 522.81M196.28 373.39L558.58 213.79M203.27 251.62L553.57 521.22M199.79 376.08L562.09 216.48M210.51 248.42L560.81 518.02M206.79 381.48L569.09 221.88M214.14 246.83L564.44 516.43M210.30 384.17L572.60 224.57M217.76 245.23L568.06 514.83M213.80 386.87L576.10 227.27M221.38 243.64L571.68 513.24M217.30 389.56L579.60 229.96M225.00 242.04L575.31 511.64M220.80 392.26L583.11 232.66M228.63 240.44L578.93 510.04M224.31 394.96L586.61 235.36M232.25 238.85L582.55 508.45M227.81 397.65L590.11 238.05M235.87 237.25L586.17 506.85M231.31 400.35L593.61 240.75M239.50 235.66L589.80 505.26M234.82 403.04L597.12 243.44M246.74 232.46L597.04 502.06M241.82 408.44L604.12 248.84M250.37 230.87L600.67 500.47M245.33 411.13L607.63 251.53M253.99 229.27L604.29 498.87M248.83 413.83L611.13 254.23M257.61 227.68L607.91 497.28M252.33 416.52L614.63 256.92M261.24 226.08L611.54 495.68M255.84 419.22L618.13 259.62M264.86 224.48L615.16 494.08M259.34 421.92L621.64 262.32M268.48 222.89L618.78 492.49M262.84 424.61L625.14 265.01M272.10 221.29L622.40 490.89M266.34 427.31L628.64 267.71M275.73 219.70L626.03 489.30M269.85 430.00L632.15 270.40M282.97 216.50L633.27 486.10M276.85 435.40L639.15 275.80M286.60 214.91L636.90 484.51M280.36 438.09L642.66 278.49M290.22 213.31L640.52 482.91M283.86 440.79L646.16 281.19M293.84 211.72L644.14 481.32M287.36 443.48L649.66 283.88M297.47 210.12L647.77 479.72M290.87 446.18L653.16 286.58M301.09 208.52L651.39 478.12M294.37 448.88L656.67 289.28M304.71 206.93L655.01 476.53M297.87 451.57L660.17 291.97M308.33 205.33L658.63 474.93M301.37 454.27L663.67 294.67M311.96 203.74L662.26 473.34M304.88 456.96L667.18 297.36M319.20 200.54L669.50 470.14M311.88 462.36L674.18 302.76M322.83 198.95L673.13 468.55M315.39 465.05L677.69 305.45M326.45 197.35L676.75 466.95M318.89 467.75L681.19 308.15M330.07 195.76L680.37 465.36M322.39 470.44L684.69 310.84M333.69 194.16L683.99 463.76M325.89 473.14L688.20 313.54M337.32 192.56L687.62 462.16M329.40 475.84L691.70 316.24M340.94 190.97L691.24 460.57M332.90 478.53L695.20 318.93M344.56 189.37L694.86 458.97M336.40 481.23L698.70 321.63M348.19 187.78L698.49 457.38M339.91 483.92L702.21 324.32M355.43 184.58L705.73 454.18M346.91 489.32L709.21 329.72M359.06 182.99L709.36 452.59M350.42 492.01L712.72 332.41M362.68 181.39L712.98 450.99M353.92 494.71L716.22 335.11M366.30 179.80L716.60 449.40M357.42 497.40L719.72 337.80M369.92 178.20L720.22 447.80M360.92 500.10L723.23 340.50M373.55 176.60L723.85 446.20M364.43 502.80L726.73 343.20M377.17 175.01L727.47 444.61M367.93 505.49L730.23 345.89M380.79 173.41L731.09 443.01M371.43 508.19L733.73 348.59M384.42 171.82L734.72 441.42M374.94 510.88L737.24 351.28M391.66 168.62L741.96 438.22M381.94 516.28L744.24 356.68M395.29 167.03L745.59 436.63M385.45 518.97L747.75 359.37M398.91 165.43L749.21 435.03M388.95 521.67L751.25 362.07M402.53 163.84L752.83 433.44M392.45 524.36L754.75 364.76M406.15 162.24L756.45 431.84M395.95 527.06L758.26 367.46M409.78 160.64L760.08 430.24M399.46 529.76L761.76 370.16M413.40 159.05L763.70 428.65M402.96 532.45L765.26 372.85M417.02 157.45L767.32 427.05M406.46 535.15L768.76 375.55M420.65 155.86L770.95 425.46M409.97 537.84L772.27 378.24M427.89 152.66L778.19 422.26M416.97 543.24L779.27 383.64M431.52 151.07L781.82 420.67M420.48 545.93L782.78 386.33M435.14 149.47L785.44 419.07M423.98 548.63L786.28 389.03M438.76 147.88L789.06 417.48M427.48 551.32L789.78 391.72M442.38 146.28L792.68 415.88M430.98 554.02L793.28 394.42M446.01 144.68L796.31 414.28M434.49 556.72L796.79 397.12M449.63 143.09L799.93 412.69M437.99 559.41L800.29 399.81M453.25 141.49L803.55 411.09M441.49 562.11L803.79 402.51M456.88 139.90L807.18 409.50M445.00 564.80L807.30 405.20" stroke="#202040" stroke-opacity="0.27" stroke-width="1" fill="none"/><path d="M98.20 297.90L448.50 567.50M98.20 297.90L460.50 138.30M134.43 281.94L484.73 551.54M133.23 324.86L495.53 165.26M170.66 265.98L520.96 535.58M168.26 351.82L530.56 192.22M206.89 250.02L557.19 519.62M203.29 378.78L565.59 219.18M243.12 234.06L593.42 503.66M238.32 405.74L600.62 246.14M279.35 218.10L629.65 487.70M273.35 432.70L635.65 273.10M315.58 202.14L665.88 471.74M308.38 459.66L670.68 300.06M351.81 186.18L702.11 455.78M343.41 486.62L705.71 327.02M388.04 170.22L738.34 439.82M378.44 513.58L740.74 353.98M424.27 154.26L774.57 423.86M413.47 540.54L775.77 380.94M460.50 138.30L810.80 407.90M448.50 567.50L810.80 407.90" stroke="#1a1a38" stroke-opacity="0.6" stroke-width="1" fill="none"/><path d="M302.10 253.80L516.90 159.60L563.30 304.60L349.60 398.60Z" fill="#a9a9a9" stroke="#000" stroke-width="2" stroke-linejoin="miter"/><g transform="translate(-6 1.8)"><g transform="matrix(1.07400 -0.47100 0.39583 1.20667 302.100 253.800)"><g transform="translate(27.4 0) scale(0.85 1)"><text x="0" y="77" font-family="Liberation Sans" font-size="71" fill="#8a8a8a" stroke="#000" stroke-width="1.5" stroke-linejoin="round">H</text></g><g transform="translate(69.5 0) scale(0.85 1)"><text x="0" y="77" font-family="Liberation Sans" font-size="66" fill="#8a8a8a" stroke="#000" stroke-width="1.5" stroke-linejoin="round">o</text></g><g transform="translate(102.3 0) scale(0.9 1)"><text x="0" y="77" font-family="Liberation Sans" font-size="71" fill="#8a8a8a" stroke="#000" stroke-width="1.5" stroke-linejoin="round">l</text></g><g transform="translate(116.3 0) scale(0.75 1)"><text x="0" y="77" font-family="Liberation Sans" font-size="66" fill="#8a8a8a" stroke="#000" stroke-width="1.5" stroke-linejoin="round">a</text></g><g transform="translate(147.3 0) scale(0.75 1)"><text x="0" y="77" font-family="Liberation Sans" font-size="66" fill="#8a8a8a" stroke="#000" stroke-width="1.5" stroke-linejoin="round">a</text></g><path d="M18 53.5H22.5L24 87.5H16.5Z M183.5 28.5H191L189.5 63.5H184.5Z" fill="#8a8a8a" stroke="#000" stroke-width="1.5" stroke-linejoin="round"/><circle cx="20.2" cy="44" r="3.8" fill="#8a8a8a" stroke="#000" stroke-width="1.5"/><circle cx="187.2" cy="71.5" r="3.8" fill="#8a8a8a" stroke="#000" stroke-width="1.5"/></g></g><g transform="matrix(1.07400 -0.47100 0.39583 1.20667 302.100 253.800)"><g transform="translate(27.4 0) scale(0.85 1)"><text x="0" y="77" font-family="Liberation Sans" font-size="71" fill="#a8a8a8" stroke="#000" stroke-width="1.5" stroke-linejoin="round">H</text></g><g transform="translate(69.5 0) scale(0.85 1)"><text x="0" y="77" font-family="Liberation Sans" font-size="66" fill="#a8a8a8" stroke="#000" stroke-width="1.5" stroke-linejoin="round">o</text></g><g transform="translate(102.3 0) scale(0.9 1)"><text x="0" y="77" font-family="Liberation Sans" font-size="71" fill="#a8a8a8" stroke="#000" stroke-width="1.5" stroke-linejoin="round">l</text></g><g transform="translate(116.3 0) scale(0.75 1)"><text x="0" y="77" font-family="Liberation Sans" font-size="66" fill="#a8a8a8" stroke="#000" stroke-width="1.5" stroke-linejoin="round">a</text></g><g transform="translate(147.3 0) scale(0.75 1)"><text x="0" y="77" font-family="Liberation Sans" font-size="66" fill="#a8a8a8" stroke="#000" stroke-width="1.5" stroke-linejoin="round">a</text></g><path d="M18 53.5H22.5L24 87.5H16.5Z M183.5 28.5H191L189.5 63.5H184.5Z" fill="#a8a8a8" stroke="#000" stroke-width="1.5" stroke-linejoin="round"/><circle cx="20.2" cy="44" r="3.8" fill="#a8a8a8" stroke="#000" stroke-width="1.5"/><circle cx="187.2" cy="71.5" r="3.8" fill="#a8a8a8" stroke="#000" stroke-width="1.5"/></g></svg>
<svg style="left:1225px;top:625px;" width="40" height="35" viewBox="0 0 40 35"><path d="M15.02 28.41L4.23 18.50L2.57 20.50L14.38 29.19Z" fill="#1a9a1a"/><path d="M14.90 29.26L27.03 24.69L25.97 22.31L14.50 28.34Z" fill="#9a1a1a"/><path d="M15.19 28.90L20.07 9.36L17.53 8.84L14.21 28.70Z" fill="#1a1a8a"/><text x="21.5" y="10.2" font-family="Liberation Sans" font-size="10.5" fill="#000">Z</text><text x="29.5" y="24" font-family="Liberation Sans" font-size="10.5" fill="#000">X</text><text x="4.8" y="20.2" font-family="Liberation Sans" font-size="10.5" fill="#000">Y</text></svg>
<div class="a" style="left:274px;top:685px;width:207px;height:32px;background:linear-gradient(#fbfbfa,#ffffff);border:1px solid #c4c1bc;border-top:none;border-radius:0 0 4px 4px"></div>
<svg style="left:281px;top:692px;" width="17" height="16" viewBox="0 0 17 16"><path d="M1 1H8.5V4H4V6.5H7V9.5H4V13.5H1Z" fill="#f03a10" stroke="#c02000" stroke-width=".5"/><path d="M9.80 3.30L10.89 3.41L11.29 5.30L11.97 5.66L13.76 4.94L14.46 5.79L13.40 7.41L13.63 8.14L15.40 8.90L15.29 9.99L13.40 10.39L13.04 11.07L13.76 12.86L12.91 13.56L11.29 12.50L10.56 12.73L9.80 14.50L8.71 14.39L8.31 12.50L7.63 12.14L5.84 12.86L5.14 12.01L6.20 10.39L5.97 9.66L4.20 8.90L4.31 7.81L6.20 7.41L6.56 6.73L5.84 4.94L6.69 4.24L8.31 5.30L9.04 5.07Z" fill="#1a40b0" stroke="#0a2070" stroke-width=".5"/><circle cx="9.8" cy="8.9" r="1.7" fill="#f4f4f4"/></svg>
<div class="t" style="left:305px;top:694.15px;font-size:14px;color:#3c3c3c;font-weight:400;letter-spacing:0.12px;">F2-T18-ejemplo-ini : 1</div>
<svg style="left:457px;top:695px;" width="13" height="12" viewBox="0 0 13 12"><path d="M2.2 2L10.8 10M10.8 2L2.2 10" stroke="#5a5a5a" stroke-width="3.4" stroke-linecap="round"/></svg>
<div class="a" style="left:0;top:717px;width:1300px;height:1px;background:#d6d4d0"></div>
<div class="t" style="left:1165.5px;top:726.45px;font-size:14px;color:#3c3c3c;font-weight:400;letter-spacing:0.4px;">194.40 x 117.30 mm</div>
</body></html>
